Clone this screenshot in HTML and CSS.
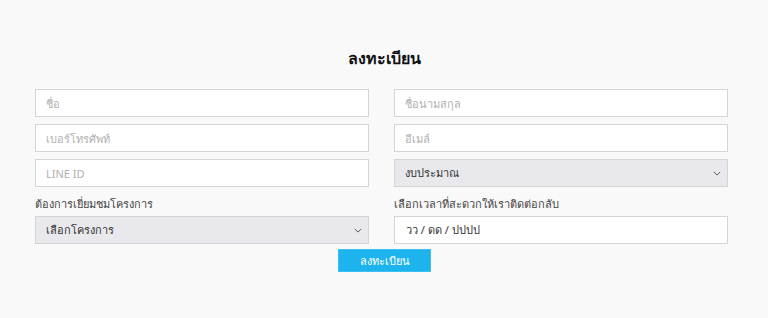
FILE: index.html
```html
<!DOCTYPE html>
<html lang="th">
<head>
<meta charset="utf-8">
<title>ลงทะเบียน</title>
<link rel="stylesheet" href="styles.css">
</head>
<body>
<section class="register">
  <h2 class="title">ลงทะเบียน</h2>
  <form class="form">
    <div class="grid">
      <input class="field" type="text" placeholder="ชื่อ">
      <input class="field" type="text" placeholder="ชื่อนามสกุล">
      <input class="field" type="text" placeholder="เบอร์โทรศัพท์">
      <input class="field" type="text" placeholder="อีเมล์">
      <input class="field" type="text" placeholder="LINE ID">
      <div class="select"><span>งบประมาณ</span><svg class="chev" viewBox="0 0 10 6" width="8" height="5"><path d="M1 1l4 4 4-4" fill="none" stroke="#555" stroke-width="1.2"/></svg></div>
      <div class="group">
        <label class="label">ต้องการเยี่ยมชมโครงการ</label>
        <div class="select"><span>เลือกโครงการ</span><svg class="chev" viewBox="0 0 10 6" width="8" height="5"><path d="M1 1l4 4 4-4" fill="none" stroke="#555" stroke-width="1.2"/></svg></div>
      </div>
      <div class="group">
        <label class="label">เลือกเวลาที่สะดวกให้เราติดต่อกลับ</label>
        <div class="date">วว / ดด / ปปปป</div>
      </div>
    </div>
    <div class="actions"><button class="btn" type="button">ลงทะเบียน</button></div>
  </form>
</section>
</body>
</html>
```
FILE: styles.css
```css
* { box-sizing: border-box; }
html, body { margin: 0; padding: 0; }
body {
  background: #f9f9f9;
  font-family: "Noto Sans", "Noto Sans CJK SC", sans-serif;
  width: 768px;
  height: 318px;
  overflow: hidden;
}
.register { padding: 47px 40px 0 35px; }
.title {
  margin: 0 0 20px;
  text-align: center;
  font-size: 16px;
  font-weight: 700;
  color: #111;
  line-height: 22px;
  padding-left: 6px;
}
.grid {
  display: grid;
  grid-template-columns: 334px 334px;
  column-gap: 25px;
  row-gap: 7px;
}
.field, .select, .date {
  height: 28px;
  border: 1px solid #d4d4d4;
  background: #fff;
  font-family: inherit;
  font-size: 11px;
  padding: 0 10px;
  color: #333;
  outline: none;
  margin: 0;
  width: 100%;
  display: flex;
  align-items: center;
}
.field::placeholder { color: #b0b0b0; }
.select {
  background: #e9e9ed;
  justify-content: space-between;
  color: #333;
  padding-left: 10px;
  padding-right: 6px;
}
.chev { display: block; }
.group { display: flex; flex-direction: column; margin-top: 3px; }
.label {
  font-size: 11px;
  color: #444;
  line-height: 14px;
  margin-bottom: 5px;
}
.date { color: #333; padding-left: 11px; }
.actions { display: flex; justify-content: center; margin-top: 5px; padding-left: 6px; }
.btn {
  width: 93px;
  height: 23px;
  background: #1db4ee;
  border: 1px solid #3cc0f2;
  color: #fff;
  font-family: inherit;
  font-size: 11px;
  padding: 0;
}
```
